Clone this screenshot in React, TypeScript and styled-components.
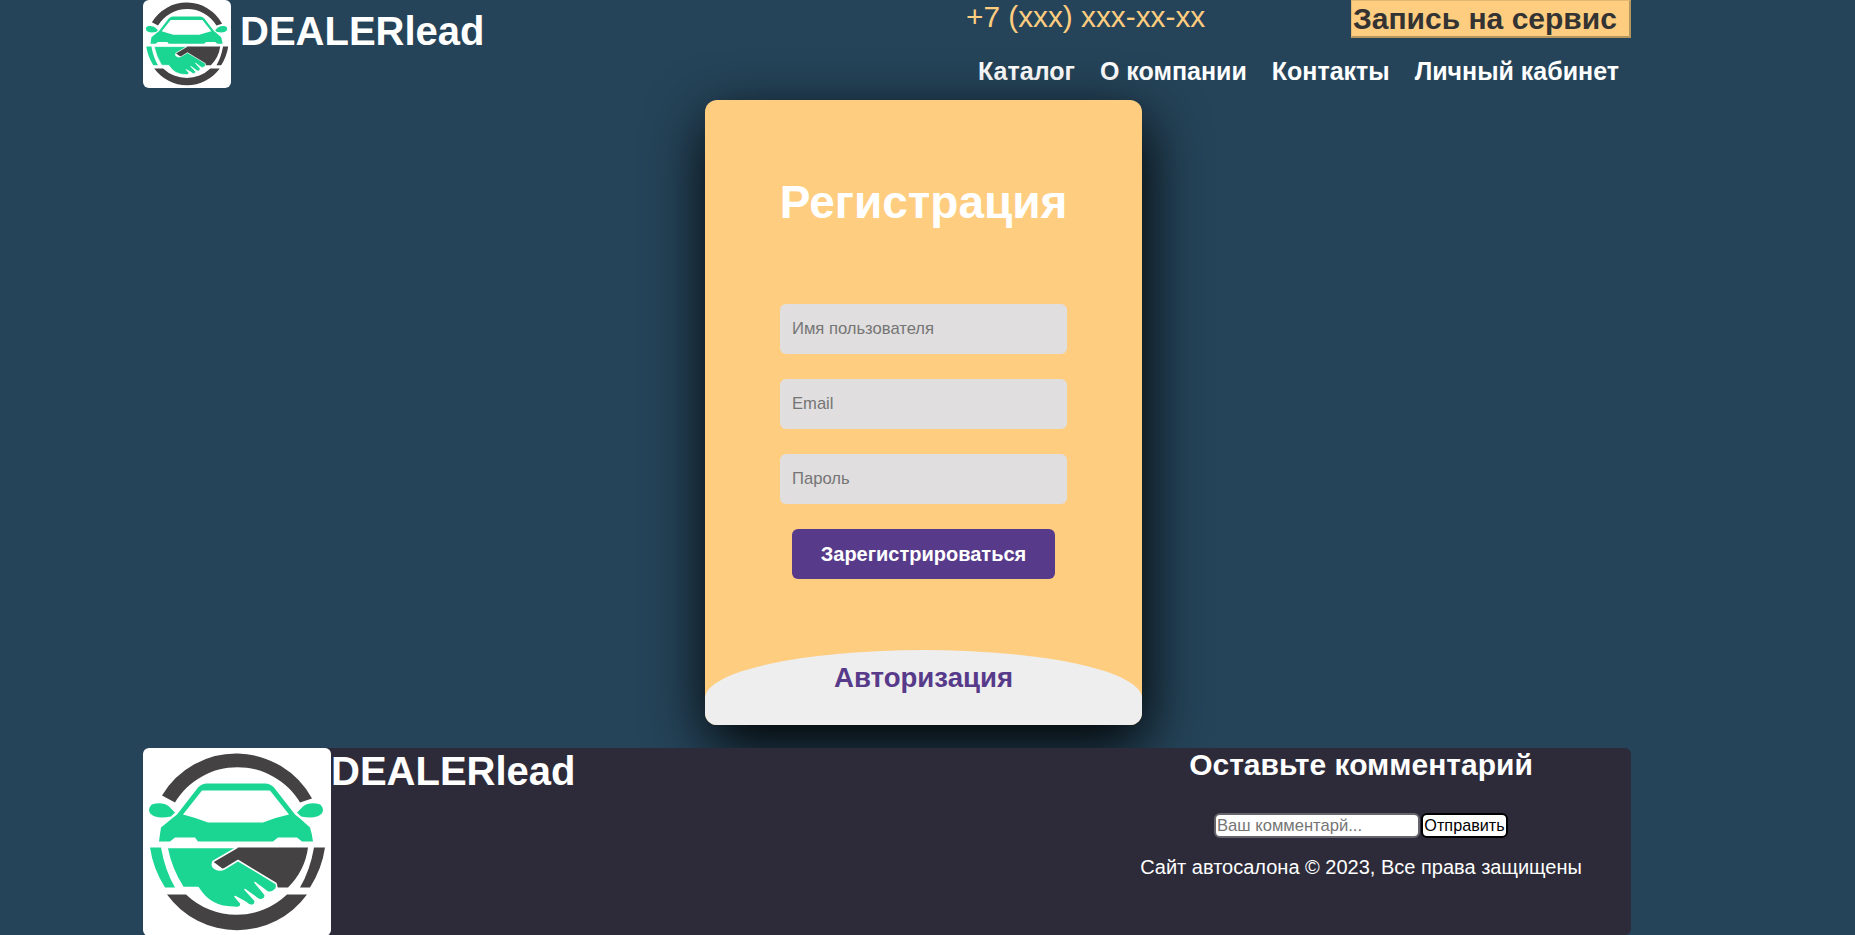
import React from "react";
import styled, { createGlobalStyle } from "styled-components";

const Global = createGlobalStyle`
  html, body { margin: 0; padding: 0; }
  body { background: #254459; font-family: "Liberation Sans", Arial, sans-serif; color: #fff; }
  * { box-sizing: border-box; }
`;

const Page = styled.div`
  width: 1855px;
  height: 935px;
  overflow: hidden;
  display: flex;
  flex-direction: column;
  padding-left: 143px;
`;

const Header = styled.header`
  width: 1488px;
  height: 100px;
  display: flex;
  justify-content: space-between;
  align-items: flex-start;
`;

const Brand = styled.div`
  display: flex;
  align-items: flex-start;
`;

const LogoBox = styled.div<{ $size: number }>`
  width: ${(p) => p.$size}px;
  height: ${(p) => p.$size}px;
  flex: none;
  background: #fff;
  border-radius: 6px;
  overflow: hidden;
  svg { display: block; width: 100%; height: 100%; }
`;

const BrandName = styled.div<{ $indent: number }>`
  font-size: 40px;
  font-weight: 700;
  line-height: 46px;
  margin-left: ${(p) => p.$indent}px;
  margin-top: 8px;
  color: #fff;
`;

const HeaderRight = styled.div`
  width: 665px;
  display: flex;
  flex-direction: column;
`;

const TopRow = styled.div`
  display: flex;
  justify-content: space-between;
  align-items: flex-start;
`;

const Phone = styled.div`
  font-size: 29.8px;
  line-height: 34px;
  color: #fecd80;
`;

const ServiceButton = styled.button`
  width: 280px;
  height: 38px;
  padding: 0 0 0 1px;
  text-align: left;
  background: #fecd80;
  color: #333;
  font: 700 30px/34px "Liberation Sans", Arial, sans-serif;
  border-style: solid;
  border-width: 1px 2px 2px 1px;
  border-color: #e3b873 #b5965f #b5965f #e3b873;
`;

const Nav = styled.nav`
  display: flex;
  justify-content: flex-end;
  gap: 25px;
  padding-right: 12px;
  margin-top: 19px;
`;

const NavLink = styled.a`
  font-size: 25px;
  font-weight: 700;
  line-height: 28px;
  color: #fff;
`;

const Main = styled.main`
  height: 648px;
  padding-left: 562px;
`;

const Card = styled.section`
  width: 437px;
  height: 625px;
  background: #fecd80;
  border-radius: 12px;
  overflow: hidden;
  box-shadow: 3px 20px 60px #000;
  display: flex;
  flex-direction: column;
  align-items: center;
`;

const Title = styled.h1`
  margin: 76px 0 0;
  font-size: 46px;
  line-height: 53px;
  font-weight: 700;
  color: #fff;
`;

const FormFields = styled.div`
  margin-top: 75px;
  display: flex;
  flex-direction: column;
  align-items: center;
  gap: 25px;
`;

const Field = styled.input`
  width: 287px;
  height: 50px;
  padding: 12px;
  border: none;
  outline: none;
  background: #e0dede;
  border-radius: 6px;
  font: 16.6px "Liberation Sans", Arial, sans-serif;
  &::placeholder { color: #757575; opacity: 1; }
`;

const Submit = styled.button`
  width: 263px;
  height: 50px;
  border: none;
  border-radius: 6px;
  background: #573b8a;
  color: #fff;
  font: 700 20px "Liberation Sans", Arial, sans-serif;
`;

const LoginPanel = styled.div`
  margin-top: auto;
  width: 100%;
  height: 75px;
  background: #eee;
  border-top-left-radius: 218.5px 48px;
  border-top-right-radius: 218.5px 48px;
  text-align: center;
  color: #573b8a;
  font-size: 27.6px;
  font-weight: 700;
  line-height: 32px;
  padding-top: 12px;
`;

const Footer = styled.footer`
  width: 1488px;
  height: 187px;
  background: #2d2b3a;
  border-radius: 6px;
  display: flex;
  justify-content: space-between;
`;

const FooterBrand = styled.div`
  display: flex;
  align-items: flex-start;
`;

const FooterBrandName = styled(BrandName)`
  margin-top: 0;
`;

const CommentColumn = styled.div`
  width: 490px;
  margin-right: 25px;
  display: flex;
  flex-direction: column;
  align-items: center;
`;

const CommentTitle = styled.h3`
  margin: 0;
  font-size: 30px;
  line-height: 33px;
  font-weight: 700;
  color: #fff;
`;

const CommentForm = styled.form`
  margin-top: 32px;
  display: flex;
  gap: 1px;
`;

const CommentInput = styled.input`
  width: 206px;
  height: 25px;
  padding: 0 1px;
  border: 2px solid #66656d;
  border-radius: 6px;
  background: #fff;
  font: 16.6px "Liberation Sans", Arial, sans-serif;
  &::placeholder { color: #757575; opacity: 1; }
`;

const CommentSend = styled.button`
  width: 87px;
  height: 25px;
  padding: 0;
  border: 2px solid #000;
  border-radius: 6px;
  background: #fff;
  color: #000;
  font: 16.2px "Liberation Sans", Arial, sans-serif;
`;

const Copy = styled.p`
  margin: 18px 0 0;
  font-size: 20px;
  line-height: 23px;
  color: #fff;
`;

const G = "#1bd693";
const D = "#444243";

const Logo = () => (
  <svg viewBox="0 0 188 187">
    <path fill={D} d="M19 47 A86.5 86.5 0 0 1 169 50 L157 54 A73 73 0 0 0 32 54 Z" />
    <path fill={D} d="M24 146 H43 A73 73 0 0 0 144 146 H164 A86.5 86.5 0 0 1 24 146 Z" />
    <path fill={G} d="M7 99 H18 Q22 122 32 139 H22 Q10 120 7 99 Z" />
    <path fill={D} d="M182 99 H171 Q167 122 157 139 H167 Q179 120 182 99 Z" />
    {/* car body */}
    <path
      fill={G}
      d="M34 66 L55 39 Q59 35 64 35 H122 Q127 35 131 39 L152 66 L157 70 L167 79 Q169 85 170 93 H159 L154 89 H135 L130 93 H55 L52 89 H32 L27 93 H16 Q17 85 18 79 L29 70 Z"
    />
    <path fill="#fff" d="M40 66 L59 42 H127 L146 66 Q132 69 120 74 H65 Q52 69 40 66 Z" />
    {/* mirrors */}
    <path fill={G} d="M6 61 Q7 55 13 55 Q21 54 26 58 L32 64 L28 68 Q18 70 12 68 Q6 66 6 61 Z" />
    <path fill={G} d="M180 61 Q179 55 173 55 Q165 54 160 58 L154 64 L158 68 Q168 70 174 68 Q180 66 180 61 Z" />
    {/* handshake */}
    <path fill={D} d="M94 99 H165 Q162 122 145 139 H135 L95 112 L82 122 L70 113 Z" />
    <path
      fill={G}
      stroke="#fff"
      strokeWidth="1.5"
      strokeLinejoin="round"
      d="M24 99 H94 L70 113 Q68 118 72 120 Q77 123 82 120 L95 112 L133 135 Q135 140 131 142 Q127 145 124 143 L112 134 L122 146 Q123 150 119 151 Q116 152 113 149 L102 141 L112 152 Q113 156 109 157 Q106 157 103 154 L92 148 L98 155 Q98 159 94 159 Q78 159 70 154 Q62 150 55 139 H40 Q28 120 24 99 Z"
    />
  </svg>
);

const App: React.FC = () => (
  <>
    <Global />
    <Page>
      <Header>
        <Brand>
          <LogoBox $size={88}>
            <Logo />
          </LogoBox>
          <BrandName $indent={9}>DEALERlead</BrandName>
        </Brand>
        <HeaderRight>
          <TopRow>
            <Phone>+7 (xxx) xxx-xx-xx</Phone>
            <ServiceButton>Запись на сервис</ServiceButton>
          </TopRow>
          <Nav>
            <NavLink>Каталог</NavLink>
            <NavLink>О компании</NavLink>
            <NavLink>Контакты</NavLink>
            <NavLink>Личный кабинет</NavLink>
          </Nav>
        </HeaderRight>
      </Header>
      <Main>
        <Card>
          <Title>Регистрация</Title>
          <FormFields>
            <Field placeholder="Имя пользователя" />
            <Field placeholder="Email" />
            <Field placeholder="Пароль" />
            <Submit>Зарегистрироваться</Submit>
          </FormFields>
          <LoginPanel>Авторизация</LoginPanel>
        </Card>
      </Main>
      <Footer>
        <FooterBrand>
          <LogoBox $size={188}>
            <Logo />
          </LogoBox>
          <FooterBrandName $indent={0}>DEALERlead</FooterBrandName>
        </FooterBrand>
        <CommentColumn>
          <CommentTitle>Оставьте комментарий</CommentTitle>
          <CommentForm onSubmit={(e) => e.preventDefault()}>
            <CommentInput placeholder="Ваш комментарй..." />
            <CommentSend>Отправить</CommentSend>
          </CommentForm>
          <Copy>Сайт автосалона © 2023, Все права защищены</Copy>
        </CommentColumn>
      </Footer>
    </Page>
  </>
);

export default App;
